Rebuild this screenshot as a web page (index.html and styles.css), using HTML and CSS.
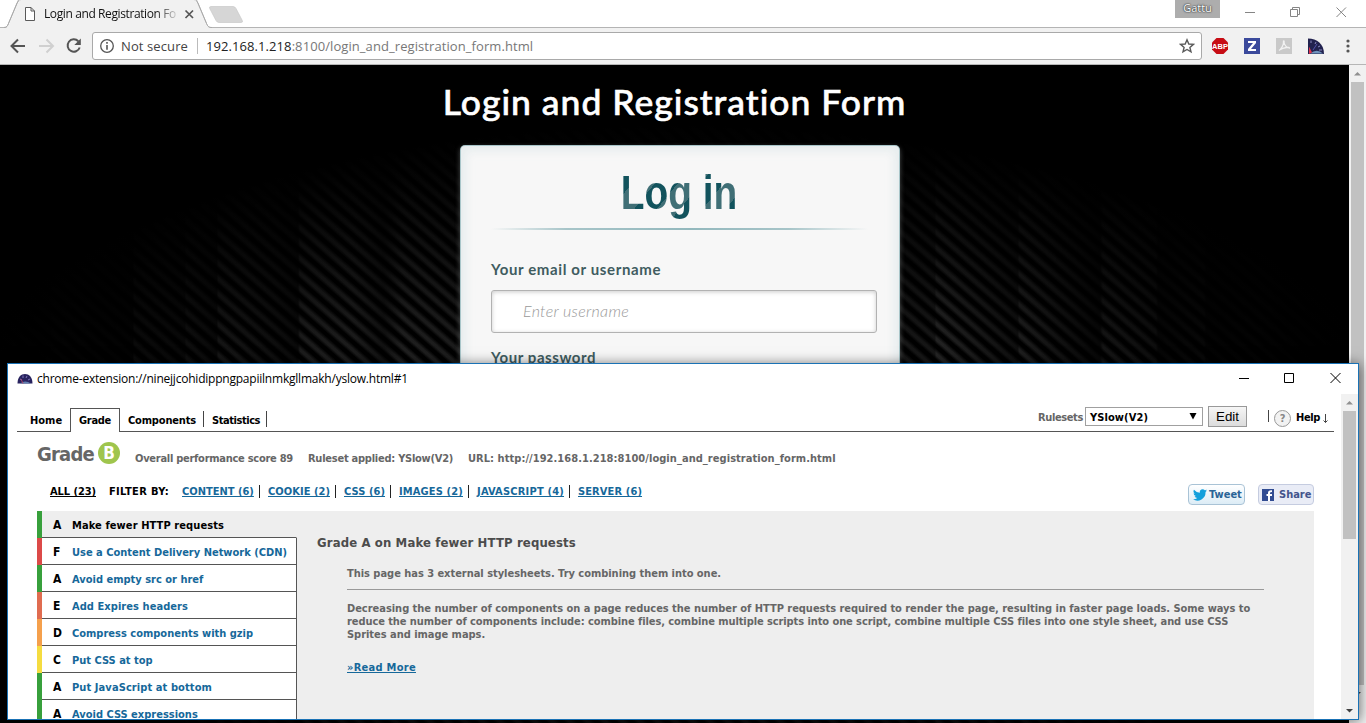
FILE: index.html
```
<!DOCTYPE html>
<html lang="en">
<head>
<meta charset="utf-8">
<title>Login and Registration Form</title>
<link rel="stylesheet" href="styles.css">
</head>
<body>
<div class="browser">
  <header class="tabstrip">
    <svg class="tabshape" width="250" height="28" viewBox="0 0 250 28">
      <path d="M0 27.5H4C7 27.5 7.500 26 8.500 23.500L17 3Q18 .5 21 .5H194Q197 .5 198 3L206.500 23.500C208 27 209 27.500 212 27.500H250" fill="none" stroke="#b4b4b4"/>
      <path d="M4 28C7 28 8 26 9 24L18 3Q19 0 21 0H194Q196 0 197.500 3L206 24Q208 28 212 28Z" fill="#f1f1f1"/>
      <path d="M4 27.500C7 27.500 7.500 26 8.500 23.500L18.500 0M196.500 0L206.500 23.500C208 27 209 27.500 212 27.500" fill="none" stroke="#a9a9a9"/>
      <path d="M211 6.500H233Q235 6.500 236 8.500L242 20Q243.500 22.500 241 22.500H219Q217 22.500 216 20.500L210 9Q208.500 6.500 211 6.500Z" fill="#d6d6d6" stroke="#c9c9c9" stroke-width=".7"/>
      <path d="M25.500 7.500H31L34.500 11V20.500H25.500ZM31 7.500V11H34.500" fill="#fff" stroke="#5a5a5a"/>
      <path d="M185.500 10.500L193 18M193 10.500L185.500 18" stroke="#555" stroke-width="1.700"/>
    </svg>
    <span class="tabtitle">Login and Registration Fo</span>
    <div class="wincontrols">
      <span class="user">Gattu</span>
      <svg width="116" height="18" viewBox="0 0 116 18" fill="none" stroke="#858585"><path d="M0 12.500H10M45.500 9.500H52.500V16.500H45.500ZM47.500 9V7.500H54.500V14.500H53M91.500 7.500L101 17M101 7.500L91.500 17"/></svg>
    </div>
  </header>
  <div class="toolbar">
    <svg class="nav" width="86" height="24" viewBox="0 0 86 24" fill="none" stroke-width="2">
      <path d="M19 12H6M12 5.500L5.500 12L12 18.500" stroke="#555"/>
      <path d="M33 12H46M40.500 5.500L47 12L40.500 18.500" stroke="#d0d0d0"/>
      <path d="M72.300 7.200A6.200 6.200 0 1 0 73.700 13.500" stroke="#555"/><path d="M74.800 4.500V11H68.300Z" fill="#555"/>
    </svg>
    <div class="omnibox">
      <svg width="16" height="16" viewBox="0 0 16 16" fill="none" stroke="#555"><circle cx="8" cy="8" r="6.300" stroke-width="1.300"/><path d="M8 7V11.700M8 4V5.700" stroke-width="1.600"/></svg>
      <span class="secure">Not secure</span>
      <span class="url">192.168.1.218<span class="path">:8100/login_and_registration_form.html</span></span>
      <svg class="star" width="16" height="16" viewBox="0 0 16 16"><path d="M8 1.800L9.800 6L14.400 6.400L10.900 9.400L12 13.900L8 11.500L4 13.900L5.100 9.400L1.600 6.400L6.200 6Z" fill="none" stroke="#5a5a5a" stroke-width="1.400"/></svg>
    </div>
    <div class="exts">
      <svg width="18" height="18" viewBox="0 0 18 18"><path d="M5.500 1H12.500L17 5.500V12.500L12.500 17H5.500L1 12.500V5.500Z" fill="#c70d15"/><text x="9" y="12" class="abp">ABP</text></svg>
      <svg width="16" height="16" viewBox="0 0 16 16"><rect width="16" height="16" fill="#3b4a9c"/><path d="M4 3H12V5L7 11H12V13H4V11L9 5H4Z" fill="#fff"/></svg>
      <svg width="16" height="16" viewBox="0 0 16 16"><rect width="16" height="16" fill="#c9c9c9"/><path d="M3 12.500C5 11 8 7 7.500 3.500C7 2.500 8.500 2.500 8 4C8 7 11 10 13.500 10C14 9 8 9 3.500 12" fill="none" stroke="#f2f2f2" stroke-width="1.300"/></svg>
      <svg width="16" height="16" viewBox="0 0 16 16"><path d="M0 0.500C9 .500 16 6 16 16H0Z" fill="#22224f"/><path d="M2 15.500Q9 10 15 15.500Z" fill="#6f93bd"/><path d="M3 2.500V5M8 4L7 6M12 8L10 9M14 12L11 12" stroke="#8b8bc0"/><path d="M1 8.500L4 14.500L1 16Z" fill="#e3344d"/><path d="M5 12L9 6" stroke="#5353ad"/></svg>
      <svg class="dots" width="4" height="14" viewBox="0 0 4 14" fill="#555"><circle cx="2" cy="2" r="1.600"/><circle cx="2" cy="7" r="1.600"/><circle cx="2" cy="12" r="1.600"/></svg>
    </div>
  </div>
  <div class="viewport">
    <main class="page">
      <h1>Login and Registration Form</h1>
      <section class="login">
        <h2><span>Log in</span></h2>
        <div class="rule"></div>
        <label class="l1">Your email or username</label>
        <div class="input">Enter username</div>
        <label class="l2">Your password</label>
      </section>
    </main>
    <div class="scroll"><svg width="17" height="17" viewBox="0 0 17 17"><path d="M5 10.500L8.500 7L12 10.500Z" fill="#909090"/></svg><div class="thumb big"></div><svg width="17" height="17" viewBox="0 0 17 17"><path d="M5 7L8.500 10.500L12 7Z" fill="#505050"/></svg></div>
  </div>
</div>

<div class="popup">
  <div class="titlebar">
    <svg width="16" height="12" viewBox="0 0 16 12"><path d="M.5 10.500C.5 4 4 1 8 1C12 1 15.500 4 15.500 10.500Z" fill="#28235f"/><path d="M3 10.500Q8 6.500 14 10.500Z" fill="#627faf"/><path d="M3 6L5 7M6 2.500V5M10 3L9 5M13 6L11 7" stroke="#8179bd"/><path d="M6 10.500L4 6" stroke="#a94469"/></svg>
    <span class="ptitle">chrome-extension://ninejjcohidippngpapiilnmkgllmakh/yslow.html#1</span>
    <svg class="pctl" width="103" height="12" viewBox="0 0 103 12" fill="none" stroke="#000"><path d="M0 6.500H10M45.500 1.500H54.500V10.500H45.500ZM91.500 1L101.500 11M101.500 1L91.500 11"/></svg>
  </div>
  <div class="pbody">
    <div class="content">
      <nav class="menu">
        <span class="tab home">Home</span><span class="tab active">Grade</span><span class="tab comp">Components</span><i class="sep"></i><span class="tab stat">Statistics</span><i class="sep"></i>
        <div class="tools">
          <span class="rs">Rulesets</span>
          <span class="select"><span>YSlow(V2)</span><svg width="8" height="7" viewBox="0 0 8 7"><path d="M.5 0H7.500L4 6.500Z"/></svg></span>
          <span class="edit">Edit</span>
          <i class="sep hs"></i>
          <span class="q">?</span>
          <span class="help">Help</span>
          <svg class="down" width="7" height="10" viewBox="0 0 7 10" fill="none" stroke="#444"><path d="M3.500 0V8.500M1.500 6.500L3.500 8.500L5.500 6.500"/></svg>
        </div>
      </nav>
      <div class="summary">
        <span class="grade">Grade</span><span class="badge">B</span>
        <span class="score">Overall performance score 89</span><span class="applied">Ruleset applied: YSlow(V2)</span><span class="purl">URL: http://192.168.1.218:8100/login_and_registration_form.html</span>
      </div>
      <div class="filters">
        <a class="all">ALL (23)</a><span class="by">FILTER BY:</span>
        <a class="f1">CONTENT (6)</a><i></i><a class="f2">COOKIE (2)</a><i></i><a class="f3">CSS (6)</a><i></i><a class="f4">IMAGES (2)</a><i></i><a class="f5">JAVASCRIPT (4)</a><i></i><a class="f6">SERVER (6)</a>
        <div class="social">
          <span class="tweet"><svg width="14" height="12" viewBox="0 0 24 20"><path d="M24 2.400a10 10 0 0 1-2.800.8A5 5 0 0 0 23.300.5a10 10 0 0 1-3.100 1.200A4.900 4.900 0 0 0 11.800 6.200 14 14 0 0 1 1.700 1a4.900 4.900 0 0 0 1.500 6.600A5 5 0 0 1 1 7a4.900 4.900 0 0 0 3.900 4.900 5 5 0 0 1-2.200 0 4.900 4.900 0 0 0 4.600 3.400A10 10 0 0 1 0 17.400 14 14 0 0 0 21.500 4.900 10 10 0 0 0 24 2.400Z" fill="#14a0dc"/></svg>Tweet</span>
          <span class="share"><svg width="12" height="12" viewBox="0 0 12 12"><rect width="12" height="12" fill="#314c92"/><path d="M8 12V7H10V5H8V4Q8 3 10 3V1.200Q6 .8 6 4V5H4.500V7H6V12Z" fill="#fff"/></svg>Share</span>
        </div>
      </div>
      <div class="report">
        <ul class="rules">
          <li class="on"><i class="bar a"></i><b>A</b><span class="r1">Make fewer HTTP requests</span></li>
          <li><i class="bar f"></i><b>F</b><span>Use a Content Delivery Network (CDN)</span></li>
          <li><i class="bar a"></i><b>A</b><span>Avoid empty src or href</span></li>
          <li><i class="bar e"></i><b>E</b><span class="r4">Add Expires headers</span></li>
          <li><i class="bar d"></i><b>D</b><span>Compress components with gzip</span></li>
          <li><i class="bar c"></i><b>C</b><span>Put CSS at top</span></li>
          <li><i class="bar a"></i><b>A</b><span class="r1">Put JavaScript at bottom</span></li>
          <li><i class="bar a"></i><b>A</b><span>Avoid CSS expressions</span></li>
        </ul>
        <article class="detail">
          <h3>Grade A on Make fewer HTTP requests</h3>
          <p class="p1">This page has 3 external stylesheets. Try combining them into one.</p>
          <hr>
          <p class="p2">Decreasing the number of components on a page reduces the number of HTTP requests required to render the page, resulting in faster page loads. Some ways to<br><span class="line2">reduce the number of components include: combine files, combine multiple scripts into one script, combine multiple CSS files into one style sheet, and use CSS</span><br>Sprites and image maps.</p>
          <a class="more">»Read More</a>
        </article>
      </div>
    </div>
    <div class="scroll inner"><svg width="17" height="17" viewBox="0 0 17 17"><path d="M5 10.500L8.500 7L12 10.500Z" fill="#909090"/></svg><div class="thumb"></div><svg class="end" width="17" height="17" viewBox="0 0 17 17"><path d="M5 7L8.500 10.500L12 7Z" fill="#404040"/></svg></div>
  </div>
</div>
</body>
</html>
```
FILE: styles.css
```
* { box-sizing: border-box; }
body { margin: 0; width: 1366px; height: 723px; overflow: hidden; position: relative; background: #fff; }
svg { display: block; flex: none; }
i { flex: none; }

.browser { display: flex; flex-direction: column; height: 723px; font-family: "Open Sans", sans-serif; }
.tabstrip { height: 28px; display: flex; position: relative; border-bottom: 1px solid #b4b4b4; background: #fff; flex: none; }
.tabshape { margin-right: -206px; height: 28px; }
.tabtitle { width: 134px; white-space: pre; font: 12px/28px "Open Sans", sans-serif; letter-spacing: -.39px; color: #111;
  -webkit-mask-image: linear-gradient(90deg, #000 112px, transparent 136px); mask-image: linear-gradient(90deg, #000 112px, transparent 136px); }
.wincontrols { margin-left: auto; display: flex; margin-right: 5px; }
.user { width: 45px; height: 18px; margin-right: 25px; background: #adadad; color: #fff; text-align: center; font: 11px/16px "Open Sans", sans-serif; text-shadow: 0 0 2px #222, 0 0 1px #222; }

.toolbar { height: 37px; background: #f1f1f1; border-bottom: 1px solid #b6b6b6; display: flex; align-items: center; padding-left: 6px; flex: none; }
.omnibox { width: 1110px; height: 28px; background: #fff; border: 1px solid #a9a9a9; border-radius: 3px; display: flex; align-items: center; padding: 0 6px; color: #444; font-size: 13px; line-height: 26px; }
.secure { margin-left: 6px; width: 77px; border-right: 1px solid #bbb; line-height: 16px; letter-spacing: .11px; white-space: nowrap; }
.url { margin-left: 8px; color: #222; letter-spacing: .08px; white-space: nowrap; }
.path { color: #777; }
.star { margin-left: auto; }
.exts { display: flex; align-items: center; gap: 16px; padding-left: 9px; }
.exts svg:first-child { margin-right: -1px; }
.abp { font: bold 7.500px "Liberation Sans", sans-serif; fill: #fff; text-anchor: middle; }
.dots { margin-left: 6px; }

.viewport { flex: 1; display: flex; min-height: 0; }
.page { flex: 1; display: flex; flex-direction: column; align-items: center; overflow: hidden;
  background:
    linear-gradient(90deg, rgba(0,0,0,.9) 0, rgba(0,0,0,.8) 50px, rgba(0,0,0,.65) 52px, rgba(0,0,0,.8) 133px, rgba(0,0,0,.3) 134px, rgba(0,0,0,.55) 185px, rgba(0,0,0,.2) 186px, rgba(0,0,0,.6) 217px, rgba(0,0,0,0) 218px, rgba(0,0,0,.65) 298px, rgba(0,0,0,0) 300px, rgba(0,0,0,.1) 353px, rgba(0,0,0,.5) 384px, rgba(0,0,0,.1) 402px, rgba(0,0,0,.3) 460px, rgba(0,0,0,.4) 900px, rgba(0,0,0,.4) 935px, rgba(0,0,0,0) 936px, rgba(0,0,0,.5) 1018px, rgba(0,0,0,0) 1019px, rgba(0,0,0,.7) 1100px, rgba(0,0,0,.1) 1103px, rgba(0,0,0,.3) 1156px, rgba(0,0,0,.7) 1158px, rgba(0,0,0,.5) 1204px, rgba(0,0,0,.8) 1206px, rgba(0,0,0,.7) 1255px, rgba(0,0,0,.95) 1349px),
    radial-gradient(ellipse 760px 350px at 675px 410px, transparent 0, rgba(0,0,0,0) 35%, rgba(0,0,0,.55) 70%, #000 100%),
    repeating-linear-gradient(41deg, #000 0, #000 3px, #2e2e2e 6px, #2e2e2e 8px, #000 11.500px);
}
h1 { margin: 16px 0 0; font: 500 35.500px/42px Lato, sans-serif; letter-spacing: .980px; color: #fff; -webkit-text-stroke: .6px #fff; white-space: nowrap; }
.login { width: 440px; height: 500px; margin: 22px 0 0 11px; background: #f7f7f7; border: 1px solid rgba(147,184,189,.8); border-radius: 5px; box-shadow: 0 2px 5px rgba(105,108,109,.7), 0 0 8px 5px rgba(208,223,226,.4) inset; padding: 17px 23px 0 30px; display: flex; flex-direction: column; flex: none; }
h2 { margin: 0 9px 0 0; text-align: center; font: bold 48px/60px "Liberation Sans", Arial, sans-serif; }
h2 span { display: inline-block; transform: scaleX(.81); color: transparent; background: repeating-linear-gradient(-45deg, #12535d 0, #12535d 20px, #406f76 20px, #406f76 40px, #12535d 40px); -webkit-background-clip: text; background-clip: text; }
.rule { height: 2px; margin: 5px 8px 0 0; background: linear-gradient(90deg, rgba(147,184,189,0) 0, rgba(147,184,189,.8) 20%, #93b8bd 53%, rgba(147,184,189,.8) 79%, rgba(147,184,189,0) 100%); }
label { font: bold 15px/20px Lato, sans-serif; color: #405c60; letter-spacing: .63px; }
.l1 { margin-top: 29px; }
.l2 { margin-top: 14px; letter-spacing: .56px; }
.input { height: 43px; margin: 11px 0 0; padding-left: 31px; width: 386px; background: #fff; border: 1px solid #b2b2b2; border-radius: 3px; box-shadow: 0 1px 4px rgba(168,168,168,.6) inset; font: italic 300 16px/39px Lato, sans-serif; letter-spacing: .3px; color: #999; }

.scroll { width: 17px; background: #f1f1f1; display: flex; flex-direction: column; flex: none; }
.thumb { width: 13px; margin-left: 2px; height: 128px; background: #c1c1c1; }
.thumb.big { height: 603px; }
.end { margin-top: auto; }

.popup { position: absolute; left: 7px; top: 363px; width: 1352px; height: 357px; background: #fff; border: 1px solid #1a72b5; box-shadow: 1px 1px 12px rgba(0,0,0,.55); display: flex; flex-direction: column; font: bold 11px/13px "DejaVu Sans Condensed", "DejaVu Sans", sans-serif; font-stretch: condensed; color: #666; white-space: nowrap; }
.titlebar { height: 30px; display: flex; align-items: center; padding-left: 9px; flex: none; }
.ptitle { margin-left: 4px; font: 12px/28px "Open Sans", sans-serif; letter-spacing: -.22px; color: #000; }
.pctl { margin: -3px 16px 0 auto; }
.pbody { flex: 1; display: flex; min-height: 0; }
.content { flex: 1; overflow: hidden; display: flex; flex-direction: column; padding-left: 9px; }
.menu { height: 38px; width: 1317px; border-bottom: 1px solid #555; display: flex; padding-top: 14px; flex: none; color: #000; }
.tab { height: 24px; line-height: 25px; }
.home { width: 53px; padding-left: 13px; }
.active { width: 50px; border: 1px solid #555; border-bottom: 0; background: #fff; padding-left: 8px; letter-spacing: -.3px; height: 24px; line-height: 24px; }
.comp { width: 83px; padding-left: 8px; letter-spacing: -.17px; }
.stat { width: 62px; padding-left: 8px; letter-spacing: -.44px; }
.sep { width: 1px; height: 16px; background: #444; margin-top: 3px; }
.tools { margin-left: auto; margin-top: -2px; display: flex; width: 296px; height: 21px; line-height: 23px; }
.rs { width: 47px; letter-spacing: -.38px; color: #666; }
.select { width: 118px; height: 19px; margin-top: 1px; border: 1px solid #a0a0a0; background: #fff; display: flex; align-items: center; justify-content: space-between; padding: 0 5px 0 4px; letter-spacing: .09px; line-height: 19px; }
.select span { padding-top: 1px; }
.edit { width: 39px; height: 21px; margin-left: 5px; border: 1px solid #999; background: linear-gradient(#f6f6f6, #dcdcdc); text-align: center; font: 13.330px/19px "Liberation Sans", Arial, sans-serif; }
.hs { height: 12px; margin: 4px 5px 0 21px; }
.q { width: 17px; height: 17px; margin-top: 4px; border: 1px solid #999; border-radius: 50%; background: #f2f2f2; text-align: center; line-height: 15px; color: #888; }
.help { margin-left: 5px; letter-spacing: -.37px; width: 26px; }
.down { margin-top: 8px; }
.summary { height: 45px; display: flex; padding: 0 0 0 20px; flex: none; line-height: 53px; }
.grade { font-size: 20px; line-height: 45px; width: 61px; letter-spacing: -.78px; }
.badge { width: 22px; height: 22px; margin-top: 10px; border-radius: 50%; background: #9fc54d; color: #fff; text-align: center; font: bold 17px/22px "DejaVu Sans Condensed", "DejaVu Sans", sans-serif; }
.score { margin-left: 15px; width: 173px; letter-spacing: -.27px; }
.applied { width: 160px; letter-spacing: -.25px; }
.purl { letter-spacing: .05px; }
.filters { height: 34px; display: flex; align-items: flex-start; padding: 8px 0 0 33px; flex: none; color: #000; }
.filters a { color: #16689a; text-decoration: underline; }
.filters .all { color: #000; width: 59px; letter-spacing: -.07px; }
.by { width: 73px; letter-spacing: .34px; }
.filters i { width: 1px; height: 13px; background: #222; margin-right: 8px; }
.f1 { width: 77px; }
.f2 { width: 67px; letter-spacing: .04px; }
.f3 { width: 46px; letter-spacing: .06px; }
.f4 { width: 69px; letter-spacing: .14px; }
.f5 { width: 92px; letter-spacing: .2px; }
.f6 { letter-spacing: .11px; }
.social { margin: -1px 27px 0 auto; display: flex; gap: 13px; line-height: 19px; }
.tweet, .share { height: 21px; border-radius: 4px; border: 1px solid #a9c3d6; display: flex; align-items: center; gap: 2px; padding-left: 4px; width: 57px; background: linear-gradient(#fff, #dcecf6); color: #2a6496; }
.share { width: 56px; border-color: #c5cce0; background: #e9ecf6; color: #43548c; gap: 5px; padding-left: 3px; }
.report { width: 1277px; height: 230px; margin-left: 20px; background: #eee; display: flex; flex: none; }
.rules { list-style: none; margin: 0; padding: 0; width: 260px; flex: none; }
.rules li { height: 27px; display: flex; line-height: 29px; background: #fff; }
.rules b { width: 30px; padding-left: 11px; color: #000; font: bold 12px/28px "DejaVu Sans Condensed", "DejaVu Sans", sans-serif; border-bottom: 1px solid #555; }
.rules span { flex: 1; color: #16689a; border-bottom: 1px solid #555; border-right: 1px solid #555; }
.rules .on { background: #eee; }
.rules .on span { color: #000; border-right-color: transparent; }
.rules .r1 { letter-spacing: .09px; }
.rules .r4 { letter-spacing: .06px; }
.bar { width: 5px; }
.a { background: #38a03c; }
.f { background: #dc4a48; }
.e { background: #e06c50; }
.d { background: #f5a04c; }
.c { background: #f5dc40; }
.detail { padding: 24px 0 0 20px; }
h3 { margin: 0; font-size: 13px; line-height: 15px; letter-spacing: .13px; color: #4c4c4c; }
.detail p { margin: 0 0 0 30px; letter-spacing: -.03px; }
.line2 { letter-spacing: -.085px; }
.detail .p1 { margin-top: 17px; }
hr { width: 917px; height: 1px; border: 0; background: #999; margin: 9px 0 12px 30px; }
.more { display: inline-block; margin: 20px 0 0 30px; color: #16689a; letter-spacing: .28px; text-decoration: underline; }
```
